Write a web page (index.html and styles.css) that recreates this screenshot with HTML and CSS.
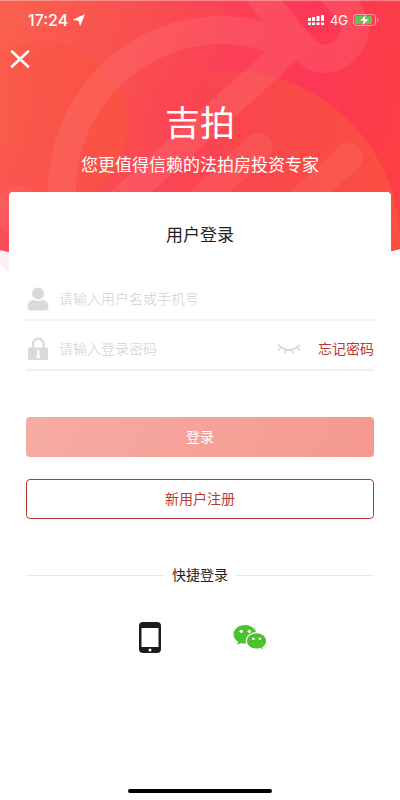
FILE: index.html
```html
<!DOCTYPE html>
<html lang="zh-CN">
<head>
<meta charset="utf-8">
<meta name="viewport" content="width=device-width, initial-scale=1">
<title>用户登录</title>
<link rel="stylesheet" href="styles.css">
</head>
<body>
<div class="screen">
  <svg class="backdrop" viewBox="0 0 400 280" preserveAspectRatio="none" aria-hidden="true">
    <defs>
      <linearGradient id="base" x1="0" y1="0.2" x2="1" y2="0.35">
        <stop offset="0" stop-color="#fa604e"/>
        <stop offset="0.3" stop-color="#f95150"/>
        <stop offset="0.55" stop-color="#fb4255"/>
        <stop offset="0.78" stop-color="#fd3855"/>
        <stop offset="1" stop-color="#fb3f46"/>
      </linearGradient>
      <linearGradient id="left" x1="0" y1="0" x2="0" y2="1">
        <stop offset="0.5" stop-color="#fb4560" stop-opacity="0"/>
        <stop offset="1" stop-color="#fb4560" stop-opacity="0.8"/>
      </linearGradient>
      <linearGradient id="disc" x1="0.1" y1="0.2" x2="1" y2="0.2">
        <stop offset="0" stop-color="#fb4556" stop-opacity="0"/>
        <stop offset="0.5" stop-color="#f9484d"/>
        <stop offset="1" stop-color="#fa5042"/>
      </linearGradient>
      <linearGradient id="orb" x1="0" y1="0" x2="1" y2="0">
        <stop offset="0" stop-color="#fa5448" stop-opacity="0"/>
        <stop offset="1" stop-color="#fa5343"/>
      </linearGradient>
      <clipPath id="edge"><path d="M0 0H400V249Q200 300 0 250Z"/></clipPath>
    </defs>
    <path d="M0 250L9 253V273Q4 269 0 264Z" fill="#fff1f2"/>
    <g clip-path="url(#edge)">
      <path d="M0 0H400V280H0Z" fill="url(#base)"/>
      <path d="M0 0H260V280H0Z" fill="url(#left)"/>
      <circle cx="228" cy="243" r="172" fill="url(#disc)"/>
      <circle cx="43" cy="125" r="84" fill="url(#orb)"/>
      <g fill="none" stroke="#ff8f90" stroke-width="28" opacity="0.19">
        <path d="M62 205V190A160 160 0 0 1 222 30Q254 30 284 44"/>
        <path d="M301 38L120 202"/>
        <path d="M254 -12L302 47Q325 71 347 47Q364 29 346 8L330 -10"/>
      </g>
      <g fill="none" stroke="#ff9a8a" stroke-width="28" stroke-linecap="round" opacity="0.14">
        <path d="M258 147L200 201M349 157L300 202"/>
      </g>
      <circle cx="20" cy="211" r="25" fill="#ff8a8a" fill-opacity="0.15"/>
    </g>
    <path d="M0 0H400V1H0Z" fill="#fff" fill-opacity="0.35"/>
  </svg>

  <header class="status">
    <div class="status-group">
      <span class="clock">17:24</span>
      <svg width="12" height="12" viewBox="0 0 12 12" aria-hidden="true"><path d="M11.500.7L7 11.500 5.800 6.500.5 5.700Z" fill="#fff" stroke="#fff" stroke-width=".6" stroke-linejoin="round"/></svg>
    </div>
    <div class="status-group">
      <svg width="18" height="12" viewBox="0 0 18 12" fill="#fff" aria-hidden="true">
        <path d="M1 4h3v3H1zM5 3h3v4H5zM9.500 2h3v5h-3zM14 1h3v6h-3z"/>
        <path d="M1 8.500h3v2.500H1zM5 8.500h3v2.500H5zM9.500 8.500h3v2.500h-3zM14 8.500h3v2.500h-3z"/>
      </svg>
      <span class="network">4G</span>
      <svg width="26" height="12" viewBox="0 0 26 12" aria-hidden="true">
        <rect x=".5" y=".5" width="22" height="11" rx="3" fill="none" stroke="#fff" stroke-opacity=".5"/>
        <rect x="2" y="2" width="17" height="8" rx="1.500" fill="#55c957"/>
        <path d="M24.300 4v4q1.200-.5 1.200-2t-1.200-2" fill="#fff" fill-opacity=".5"/>
        <path d="M13.500 0L6.500 7h4L8.500 12 16.500 5h-4.500Z" fill="#fff" stroke="#f44a50" stroke-width=".5"/>
      </svg>
    </div>
  </header>

  <button class="close" type="button" aria-label="关闭">
    <svg width="20" height="18" viewBox="0 0 20 18" aria-hidden="true"><path d="M2 1.500L18 16.500M18 1.500L2 16.500" stroke="#fff" stroke-width="2.600" stroke-linecap="round"/></svg>
  </button>

  <div class="brand">
    <h1>吉拍</h1>
    <p>您更值得信赖的法拍房投资专家</p>
  </div>

  <main class="card">
    <h2>用户登录</h2>
    <form>
      <div class="field">
        <label for="user" aria-label="用户名">
          <svg width="24" height="24" viewBox="0 0 24 24" fill="#dadada" aria-hidden="true"><circle cx="12" cy="6.500" r="6"/><path d="M1.500 20C1.500 14.500 6 13 8 13Q12 15 16 13C18 13 22.500 14.500 22.500 20Q22.500 23.500 19 23.500H5Q1.500 23.500 1.500 20Z"/></svg>
        </label>
        <input id="user" type="text" placeholder="请输入用户名或手机号">
      </div>
      <div class="field">
        <label for="password" aria-label="密码">
          <svg width="24" height="24" viewBox="0 0 24 24" aria-hidden="true"><path d="M7 11V7a5.300 5.300 0 0 1 10.600 0v4" fill="none" stroke="#dadada" stroke-width="2.200"/><rect x="2" y="10.500" width="20" height="12.500" rx="1.500" fill="#dadada"/><path d="M12.300 14V19" stroke="#fff" stroke-width="2" stroke-linecap="round"/><circle cx="12.300" cy="19.300" r="1.900" fill="#fff"/></svg>
        </label>
        <input id="password" type="password" placeholder="请输入登录密码">
        <button class="reveal" type="button" aria-label="显示密码">
          <svg width="24" height="12" viewBox="0 0 24 12" fill="none" stroke="#d2d2d2" stroke-width="1.400" stroke-linecap="round" aria-hidden="true"><path d="M1.500 2Q12 12 22.500 2M4 4.500L1.500 7M9 7L7.800 10M15 7L16 10M20 4.500L22.500 7"/></svg>
        </button>
        <a class="forgot" href="#forgot">忘记密码</a>
      </div>
      <button class="action login" type="submit">登录</button>
      <button class="action register" type="button">新用户注册</button>
    </form>

    <div class="divider"><span>快捷登录</span></div>
    <div class="quick">
      <button type="button" aria-label="手机登录">
        <svg width="36" height="36" viewBox="0 0 36 36" aria-hidden="true"><rect x="7" y="3" width="22" height="31" rx="4" fill="#1c1c1e"/><path d="M9.500 9H26.500V28H9.500Z" fill="#fff"/><circle cx="18" cy="31" r="1.500" fill="#fff"/></svg>
      </button>
      <button type="button" aria-label="微信登录">
        <svg width="36" height="36" viewBox="0 0 36 36" aria-hidden="true">
          <path d="M13 6C6.500 6 1.500 10.200 1.500 15.500C1.500 18.500 3.200 21 6 22.800L5.200 25.700 9.200 23.900Q11 24.500 13 24.500C19.500 24.500 24.500 20.500 24.500 15.500S19.500 6 13 6Z" fill="#4cc32e"/>
          <path d="M24.500 13.700C18.700 13.700 14.300 17.300 14.300 22S18.700 30.200 24.500 30.200Q26.400 30.200 28.200 29.600L31.500 31.200 30.800 28.500C33.200 27 34.700 24.700 34.700 22C34.700 17.300 30.300 13.700 24.500 13.700Z" fill="#4cc32e" stroke="#fff" stroke-width="1.200"/>
          <g fill="#fff"><circle cx="9.200" cy="12.300" r="1.600"/><circle cx="17.200" cy="12.300" r="1.600"/><circle cx="21.300" cy="19.700" r="1.300"/><circle cx="27.900" cy="19.700" r="1.300"/></g>
        </svg>
      </button>
    </div>
  </main>
  <div class="home-bar"></div>
</div>
</body>
</html>
```
FILE: styles.css
```css
* {
  box-sizing: border-box;
}

body {
  margin: 0;
  background: #fff;
  color: #1f1f1f;
  font-family: Inter, "Noto Sans CJK SC", sans-serif;
  font-size: 14px;
  line-height: 20px;
}

button,
input {
  margin: 0;
  padding: 0;
  border: 0;
  background: none;
  color: inherit;
  font: inherit;
}

button {
  cursor: pointer;
}

svg {
  display: block;
}

h1,
h2,
p {
  margin: 0;
  font-weight: 400;
}

.screen {
  position: relative;
  display: flex;
  flex-direction: column;
  min-height: 100vh;
}

.backdrop {
  position: absolute;
  z-index: -1;
  top: 0;
  left: 0;
  width: 100%;
  height: 280px;
}

.status {
  display: flex;
  justify-content: space-between;
  align-items: center;
  height: 40px;
  padding: 0 21px 0 28px;
  color: #fff;
}

.status-group {
  display: flex;
  align-items: center;
  gap: 5px;
}

.clock {
  font-size: 16px;
  font-weight: 500;
}

.network {
  font-size: 13px;
}

.close {
  align-self: flex-start;
  padding: 10px;
}

.brand {
  padding-top: 25px;
  color: #fff;
  text-align: center;
}

.brand h1 {
  font-size: 35px;
  line-height: 40px;
}

.brand p {
  padding: 10px 0 15px;
  font-size: 17px;
  line-height: 24px;
}

.card {
  flex: 1;
  margin: 0 9px;
  padding: 31px 17px;
  border-radius: 4px;
  background: #fff;
}

.card h2 {
  margin-bottom: 31px;
  font-size: 17px;
  line-height: 24px;
  text-align: center;
}

.field {
  display: flex;
  align-items: center;
  height: 50px;
  padding-top: 8px;
  border-bottom: 2px solid #f0f0f0;
}

.field:first-child {
  height: 43px;
  padding-top: 0;
}

.field input {
  flex: 1;
  min-width: 0;
  margin-left: 9px;
  outline: 0;
}

.field input::placeholder {
  color: #d0d0d0;
  font-weight: 300;
  opacity: 1;
}

.reveal {
  margin-right: 17px;
}

.forgot {
  color: #b83a30;
  text-decoration: none;
}

.action {
  display: block;
  width: 100%;
  height: 40px;
  border-radius: 4px;
}

.login {
  margin: 46px 0 22px;
  background: linear-gradient(120deg, #f6aca4, #f5988f);
  color: #fff;
}

.register {
  border: 1px solid #b83a30;
  color: #b83a30;
}

.divider {
  display: flex;
  align-items: center;
  gap: 8px;
  margin-top: 46px;
}

.divider::before,
.divider::after {
  content: "";
  flex: 1;
  height: 1px;
  background: #e8e8e8;
}

.quick {
  display: flex;
  justify-content: center;
  gap: 64px;
  margin-top: 34px;
}

.home-bar {
  align-self: center;
  width: 36%;
  height: 4px;
  margin-bottom: 7px;
  border-radius: 2px;
  background: #000;
}
```
